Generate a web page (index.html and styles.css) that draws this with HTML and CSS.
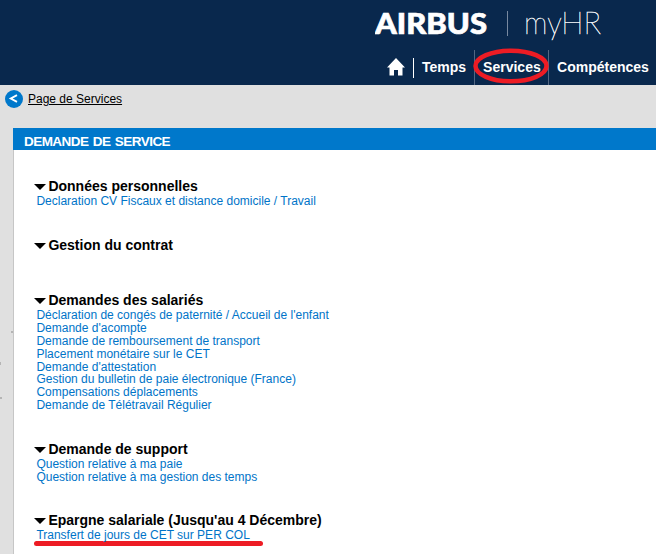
FILE: index.html
```html
<!DOCTYPE html>
<html lang="fr">
<head>
    <meta charset="UTF-8">
    <meta name="viewport" content="width=device-width, initial-scale=1.0">
    <title>myHR - Services</title>
    <link rel="stylesheet" href="styles.css">
</head>
<body>
    <header class="header">
        <svg class="logo" width="240" height="40" viewBox="0 0 240 40">
            <text class="logo-airbus" x="0" y="29" textLength="112" lengthAdjust="spacingAndGlyphs">AIRBUS</text>
            <rect class="logo-line" x="132" y="6" width="1" height="25"/>
            <text class="logo-myhr" x="149" y="29" textLength="77" lengthAdjust="spacingAndGlyphs">myHR</text>
        </svg>
        <nav class="nav">
            <a class="home" href="#">
                <svg width="18" height="18" viewBox="0 0 18 18">
                    <path d="M9 0 L18 9.5 H15.5 V17.5 H11 V12 H7 V17.5 H2.5 V9.5 H0 Z"/>
                </svg>
            </a>
            <a class="nav-item" href="#">Temps</a>
            <a class="nav-item active" href="#">Services
                <svg class="circle" width="76" height="36" viewBox="0 0 76 36">
                    <ellipse cx="38" cy="18" rx="35.5" ry="15.3"/>
                </svg>
            </a>
            <a class="nav-item" href="#">Compétences</a>
        </nav>
    </header>

    <div class="breadcrumb">
        <a class="back" href="#"><svg width="18" height="18" viewBox="0 0 18 18"><path d="M12 5.2 L5.8 8.5 L12 11.8"/></svg></a>
        <a class="page-link" href="#">Page de Services</a>
    </div>

    <div class="content">
        <div class="side">
            <svg width="13" height="426" viewBox="0 0 13 426">
                <path d="M11 203h2v2h-2z M0 234h1v3h-1z M0 269h2v2h-2z"/>
            </svg>
        </div>
        <main class="panel">
            <h1>DEMANDE DE SERVICE</h1>
            <section class="first">
                <h2>Données personnelles</h2>
                <ul>
                    <li><a href="#">Declaration CV Fiscaux et distance domicile / Travail</a></li>
                </ul>
            </section>
            <section class="contract">
                <h2>Gestion du contrat</h2>
            </section>
            <section class="employees">
                <h2>Demandes des salariés</h2>
                <ul>
                    <li><a href="#">Déclaration de congés de paternité / Accueil de l'enfant</a></li>
                    <li><a href="#">Demande d'acompte</a></li>
                    <li><a href="#">Demande de remboursement de transport</a></li>
                    <li><a href="#">Placement monétaire sur le CET</a></li>
                    <li><a href="#">Demande d'attestation</a></li>
                    <li><a href="#">Gestion du bulletin de paie électronique (France)</a></li>
                    <li><a href="#">Compensations déplacements</a></li>
                    <li><a href="#">Demande de Télétravail Régulier</a></li>
                </ul>
            </section>
            <section class="support">
                <h2>Demande de support</h2>
                <ul>
                    <li><a href="#">Question relative à ma paie</a></li>
                    <li><a href="#">Question relative à ma gestion des temps</a></li>
                </ul>
            </section>
            <section class="savings">
                <h2>Epargne salariale (Jusqu'au 4 Décembre)</h2>
                <ul>
                    <li><a href="#">Transfert de jours de CET sur PER COL</a></li>
                </ul>
                <div class="underline"></div>
            </section>
        </main>
    </div>
</body>
</html>
```

FILE: styles.css
```css
* {
    box-sizing: border-box;
}
body {
    margin: 0;
    height: 554px;
    overflow: hidden;
    background-color: #e0e0e0;
    font-family: "Liberation Sans", Arial, sans-serif;
    font-size: 12px;
}
.header {
    height: 85px;
    background-color: #09284d;
    color: white;
}
.logo {
    display: block;
    margin-left: 375px;
    padding-top: 5px;
    height: 45px;
    fill: white;
}
.logo-airbus {
    font-family: Lato, sans-serif;
    font-size: 29px;
    font-weight: 900;
    stroke: white;
    stroke-width: 0.7;
}
.logo-line {
    fill: #7889a0;
}
.logo-myhr {
    font-family: Lato, sans-serif;
    font-size: 32px;
    font-weight: 100;
    stroke: white;
    stroke-width: 0.4;
}
.nav {
    display: flex;
    height: 35px;
    margin-top: 5px;
    padding-left: 387px;
}
.home {
    flex-shrink: 0;
    width: 27px;
    height: 20px;
    margin-top: 8px;
    border-right: 1px solid white;
}
.home svg {
    display: block;
    fill: white;
}
.nav-item {
    position: relative;
    flex-shrink: 0;
    padding: 0 8px;
    color: white;
    font-size: 14px;
    font-weight: bold;
    line-height: 34px;
    text-decoration: none;
    white-space: nowrap;
}
.active {
    width: 75px;
    border-left: 1px solid #536783;
    border-right: 1px solid #536783;
}
.circle {
    position: absolute;
    left: -2px;
    top: -2px;
    fill: none;
    stroke: #ed1c24;
    stroke-width: 4.5;
}
.breadcrumb {
    display: flex;
    height: 43px;
    padding: 5px 0 0 5px;
}
.back {
    width: 18px;
    height: 18px;
    border-radius: 50%;
    background-color: #0078cb;
}
.back svg {
    display: block;
    fill: none;
    stroke: white;
    stroke-width: 1.9;
}
.page-link {
    margin-left: 5px;
    color: black;
    line-height: 18px;
}
.content {
    display: flex;
    height: 426px;
}
.side {
    width: 13px;
    fill: #b5b5b5;
}
.panel {
    flex: 1;
    border-left: 1px solid #c6c6c6;
    background-color: white;
}
h1 {
    height: 22px;
    margin: 0 0 0 -1px;
    padding: 3px 0 0 11px;
    background-color: #0078cb;
    color: white;
    font-size: 13.5px;
    line-height: 22px;
    letter-spacing: -0.55px;
    word-spacing: 1.2px;
}
h2 {
    display: flex;
    align-items: center;
    height: 16px;
    margin: 0;
    font-size: 14px;
    white-space: nowrap;
}
h2::before {
    content: "";
    margin: 2px 3px 0 -2px;
    border: 5.5px solid transparent;
    border-top: 6px solid black;
    border-bottom: 0;
}
h2::before {
    border-left-width: 6px;
    border-right-width: 6px;
    margin-right: 2px;
}
section {
    padding-left: 22.4px;
}
.first {
    height: 87px;
    padding-top: 28px;
}
.contract {
    height: 55px;
}
.employees {
    height: 149px;
}
.support {
    height: 71px;
}
ul {
    margin: 0;
    padding: 1px 0 0;
    list-style: none;
}
li {
    height: 12.88px;
    line-height: 13px;
    white-space: nowrap;
}
li a {
    color: #0074c8;
    text-decoration: none;
}
.underline {
    width: 229px;
    height: 5px;
    margin: -1px 0 0 -2px;
    border-radius: 3px;
    background-color: #ed1c24;
}
```
